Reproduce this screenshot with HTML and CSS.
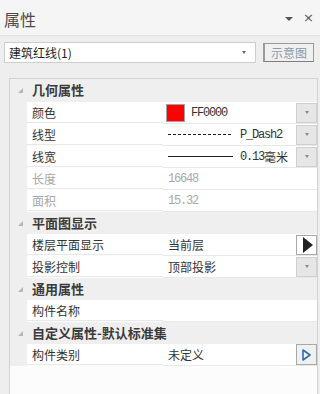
FILE: index.html
```html
<!DOCTYPE html>
<html lang="zh-CN">
<head>
    <meta charset="UTF-8">
    <title>属性</title>
    <link rel="stylesheet" href="styles.css">
</head>
<body>
    <div class="panel-head">
        <span class="title">属性</span>
        <span class="head-tools">
            <i class="menu-arrow"></i>
            <span class="close">×</span>
        </span>
    </div>

    <div class="toolbar">
        <div class="combo">
            <span>建筑红线(1)</span>
            <i class="combo-arrow"></i>
        </div>
        <button class="btn-sketch">示意图</button>
    </div>

    <div class="grid">
        <div class="cat first"><span class="gutter"><i class="expander"></i></span><span class="cat-name">几何属性</span></div>
        <div class="row">
            <span class="gutter"></span><span class="label">颜色</span>
            <span class="value"><i class="swatch"></i><span class="mono">FF0000</span><button class="drop"><i></i></button></span>
        </div>
        <div class="row">
            <span class="gutter"></span><span class="label">线型</span>
            <span class="value"><i class="line dashed"></i><span class="mono">P_Dash2</span><button class="drop"><i></i></button></span>
        </div>
        <div class="row">
            <span class="gutter"></span><span class="label">线宽</span>
            <span class="value"><i class="line solid"></i><span class="mono">0.13</span><span>毫米</span><button class="drop"><i></i></button></span>
        </div>
        <div class="row muted">
            <span class="gutter"></span><span class="label">长度</span>
            <span class="value"><span class="mono">16648</span></span>
        </div>
        <div class="row muted">
            <span class="gutter"></span><span class="label">面积</span>
            <span class="value"><span class="mono">15.32</span></span>
        </div>

        <div class="cat"><span class="gutter"><i class="expander"></i></span><span class="cat-name">平面图显示</span></div>
        <div class="row">
            <span class="gutter"></span><span class="label">楼层平面显示</span>
            <span class="value"><span>当前层</span><button class="go"><i></i></button></span>
        </div>
        <div class="row">
            <span class="gutter"></span><span class="label">投影控制</span>
            <span class="value"><span>顶部投影</span><button class="drop"><i></i></button></span>
        </div>

        <div class="cat"><span class="gutter"><i class="expander"></i></span><span class="cat-name">通用属性</span></div>
        <div class="row">
            <span class="gutter"></span><span class="label">构件名称</span>
            <span class="value"></span>
        </div>

        <div class="cat"><span class="gutter"><i class="expander"></i></span><span class="cat-name">自定义属性-默认标准集</span></div>
        <div class="row">
            <span class="gutter"></span><span class="label">构件类别</span>
            <span class="value"><span>未定义</span>
                <button class="pick">
                    <svg width="9" height="12" viewBox="0 0 9 12"><path d="M1 1 L8 6 L1 11 Z" fill="none" stroke="#2f6fa6" stroke-width="1.6" stroke-linejoin="round"/></svg>
                </button>
            </span>
        </div>
    </div>
</body>
</html>
```

FILE: styles.css
```css
html, body {
    margin: 0;
    padding: 0;
}
body {
    width: 320px;
    height: 394px;
    overflow: hidden;
    background: #eeeeee;
    color: #333;
    font-family: "Noto Sans CJK SC", "DejaVu Sans", sans-serif;
    font-size: 12px;
}
button {
    font-family: inherit;
    padding: 0;
    cursor: default;
}

/* panel title */
.panel-head {
    height: 35px;
    border-bottom: 1px solid #e2e2e2;
    background: #f5f5f5;
    display: flex;
    justify-content: space-between;
    align-items: flex-start;
}
.title {
    padding: 9px 0 0 4px;
    font-size: 16px;
    line-height: 20px;
    color: #4a4a4a;
}
.head-tools {
    display: flex;
    align-items: center;
    gap: 10px;
    padding: 11px 6px 0 0;
}
.menu-arrow {
    width: 0;
    height: 0;
    border-left: 4px solid transparent;
    border-right: 4px solid transparent;
    border-top: 4px solid #555;
    margin-top: 2px;
}
.close {
    font-family: "DejaVu Sans", sans-serif;
    font-size: 13px;
    line-height: 14px;
    color: #555;
}

/* combo row */
.toolbar {
    height: 42px;
    padding: 6px 4px 0;
    box-sizing: border-box;
    display: flex;
    align-items: flex-start;
    gap: 7px;
}
.combo {
    width: 252px;
    height: 21px;
    box-sizing: border-box;
    border: 1px solid #cdcdcd;
    background: #fff;
    display: flex;
    align-items: center;
    justify-content: space-between;
    padding: 0 9px 0 4px;
    color: #222;
}
.combo-arrow {
    width: 0;
    height: 0;
    border-left: 2px solid transparent;
    border-right: 2px solid transparent;
    border-top: 3px solid #666;
}
.btn-sketch {
    margin-top: 1px;
    width: 51px;
    height: 19px;
    box-sizing: border-box;
    border: 1px solid #9a9a9a;
    border-left-width: 2px;
    border-bottom-color: #7e7e7e;
    background: #f0f0f0;
    color: #8a9aaa;
    font-size: 12px;
    line-height: 16px;
}

/* property grid */
.grid {
    margin-left: 9px;
    width: 309px;
    height: 330px;
    box-sizing: border-box;
    border: 1px solid #d2d2d2;
    background: #fcfcfc;
}
.gutter {
    width: 17px;
    flex: none;
    background: #efefef;
    display: flex;
    align-items: center;
    justify-content: center;
}
.cat {
    height: 22px;
    display: flex;
    background: #efefef;
}
.cat.first {
    height: 23px;
}
.expander {
    width: 0;
    height: 0;
    border-left: 5px solid transparent;
    border-bottom: 5px solid #b5b5b5;
    margin-left: 3px;
}
.cat-name {
    padding-left: 5px;
    font-weight: bold;
    font-size: 13px;
    line-height: 22px;
    color: #3a3a3a;
    white-space: nowrap;
}
.row {
    height: 22px;
    display: flex;
}
.label, .value {
    height: 21px;
    border-bottom: 1px solid #e8e8e8;
    background: #fff;
    display: flex;
    align-items: center;
    white-space: nowrap;
}
.label {
    width: 136px;
    flex: none;
    padding-left: 5px;
    box-sizing: border-box;
}
.value {
    flex: 1;
    padding-left: 5px;
    color: #333;
}
.row.muted .label, .row.muted .value {
    color: #a8a8a8;
}
.mono {
    font-family: "Liberation Mono", monospace;
    font-size: 12px;
    letter-spacing: -1.2px;
}
.swatch {
    width: 19px;
    height: 18px;
    box-sizing: border-box;
    border: 1px solid #a0a0a0;
    background: #ff0000;
    margin: 0 6px 0 -2px;
}
.line {
    width: 65px;
    height: 1px;
    margin-right: 7px;
}
.line.dashed {
    background: repeating-linear-gradient(90deg, #222 0 3px, transparent 3px 5px);
}
.line.solid {
    background: #222;
}

/* cell buttons */
.drop, .go, .pick {
    margin-left: auto;
    width: 21px;
    height: 20px;
    box-sizing: border-box;
    display: flex;
    align-items: center;
    justify-content: center;
}
.drop {
    border: 1px solid #cfcfcf;
    background: #e6e6e6;
}
.drop i {
    width: 0;
    height: 0;
    border-left: 2px solid transparent;
    border-right: 2px solid transparent;
    border-top: 3px solid #888;
}
.go {
    border: 1px solid #a8a8a8;
    background: #fff;
    justify-content: flex-start;
    padding-left: 6px;
}
.go i {
    width: 0;
    height: 0;
    border-top: 8px solid transparent;
    border-bottom: 8px solid transparent;
    border-left: 10px solid #222;
}
.pick {
    border: 1px solid #a8a8a8;
    background: #f0f0f0;
    height: 21px;
}
```
